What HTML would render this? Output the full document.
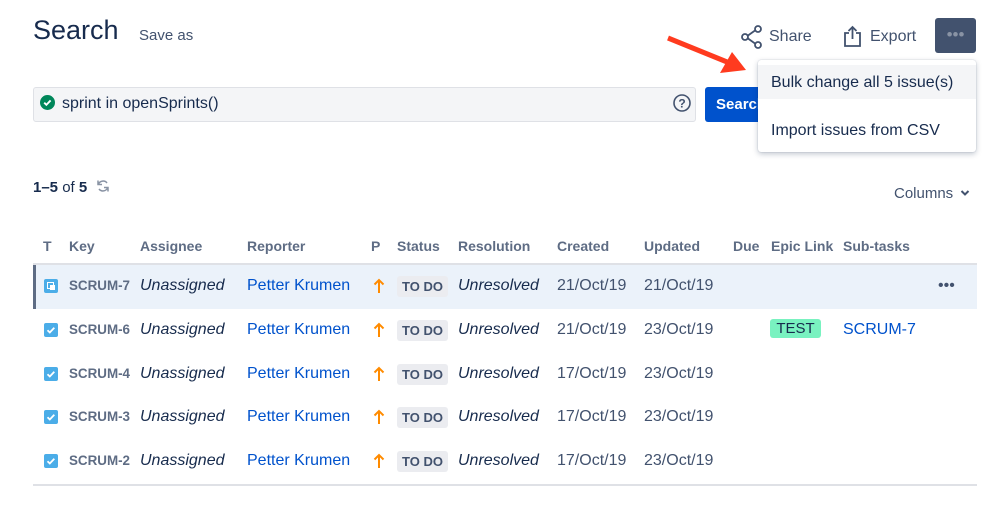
<!DOCTYPE html><html><head><style>
body{margin:0;width:998px;height:510px;background:#fff;font-family:"Liberation Sans",sans-serif;color:#172b4d;position:relative;overflow:hidden}
.a{position:absolute;white-space:nowrap}
.h{font-size:14px;font-weight:bold;color:#5e6c84;top:238px}
.row{position:absolute;left:33px;width:944px;height:44px}
.c{position:absolute;font-size:16px;line-height:42px;top:0}
.key{font-size:13.4px;font-weight:bold;color:#5e6c84}
.it{font-style:italic;color:#172b4d}
.lnk{color:#0052cc}
.dt{color:#42526e}
.bd{position:absolute;top:11px;height:21px;width:51px;background:#ebecf0;border-radius:3px;font-size:13px;font-weight:bold;color:#42526e;line-height:21px;text-align:center}
.ic{position:absolute;top:14px;left:11px;width:14px;height:14px;background:#4bade8;border-radius:2px}
</style></head><body>
<div class="a" style="left:33px;top:15px;font-size:27px;font-weight:500">Search</div>
<div class="a" style="left:139px;top:27px;font-size:15px;color:#42526e">Save as</div>
<svg class="a" style="left:740px;top:25px" width="24" height="24" viewBox="0 0 24 24" fill="none" stroke="#42526e" stroke-width="1.8"><circle cx="18" cy="4" r="3"/><circle cx="5" cy="12" r="3"/><circle cx="18" cy="20" r="3"/><path d="M8 10.5l7-5M8 13.5l7 5"/></svg>
<div class="a" style="left:769px;top:28px;font-size:16px;color:#42526e">Share</div>
<svg class="a" style="left:843px;top:25px" width="20" height="22" viewBox="0 0 20 22" fill="none" stroke="#42526e" stroke-width="1.8"><path d="M6 8H2v13h15V8h-4M9.5 14V2M5.5 6l4-4 4 4"/></svg>
<div class="a" style="left:870px;top:28px;font-size:16px;color:#42526e">Export</div>
<div class="a" style="left:935px;top:18px;width:41px;height:35px;background:#42526e;border-radius:3px;color:#8993a4;font-size:17px;text-align:center;line-height:33px;letter-spacing:0px">•••</div>
<div class="a" style="left:33px;top:87px;width:661px;height:33px;background:#f4f5f7;border:1px solid #dfe1e6;border-radius:3px"></div>
<svg class="a" style="left:40px;top:95px" width="15" height="15" viewBox="0 0 16 16"><circle cx="8" cy="8" r="8" fill="#00875a"/><path d="M4.5 8.2l2.3 2.3 4.5-4.7" stroke="#fff" stroke-width="2" fill="none"/></svg>
<div class="a" style="left:62px;top:95px;font-size:16px">sprint in openSprints()</div>
<svg class="a" style="left:673px;top:94px" width="18" height="18" viewBox="0 0 18 18"><circle cx="9" cy="9" r="8" fill="none" stroke="#42526e" stroke-width="1.6"/><text x="9" y="13.5" font-size="12" font-weight="bold" text-anchor="middle" fill="#42526e" font-family="Liberation Sans">?</text></svg>
<div class="a" style="left:705px;top:87px;width:70px;height:35px;background:#0052cc;border-radius:3px;color:#fff;font-weight:bold;font-size:15px;line-height:35px;padding-left:11px;box-sizing:border-box;overflow:hidden">Search</div>
<div class="a" style="left:758px;top:60px;width:218px;height:92px;background:#fff;border-radius:3px;box-shadow:0 2px 6px rgba(9,30,66,.25),0 0 1px rgba(9,30,66,.3)">
<div style="position:absolute;left:0;top:5px;width:218px;height:34px;background:#f4f5f7"></div>
<div class="a" style="left:13px;top:14px;font-size:16px">Bulk change all 5 issue(s)</div>
<div class="a" style="left:13px;top:62px;font-size:16px">Import issues from CSV</div></div>
<svg class="a" style="left:660px;top:30px" width="95" height="50"><path d="M8 8L72 34" stroke="#ff3b1f" stroke-width="5"/><path d="M86 40L60 43L72 22Z" fill="#ff3b1f"/></svg>
<div class="a" style="left:33px;top:179px;font-size:15px"><b>1–5</b> of <b>5</b></div>
<svg class="a" style="left:96px;top:179px" width="14" height="14" viewBox="0 0 14 14" fill="none" stroke="#8993a4" stroke-width="1.5"><path d="M11 4A5 5 0 0 0 2.5 5M3 10a5 5 0 0 0 8.5-1M2 1.5v4h4M12 12.5v-4H8"/></svg>
<div class="a" style="left:894px;top:185px;font-size:15px;color:#42526e">Columns</div>
<svg class="a" style="left:960px;top:189px" width="10" height="8"><path d="M1.5 2l3.5 3.5L8.5 2" stroke="#42526e" stroke-width="2" fill="none"/></svg>
<div class="a h" style="left:43px">T</div><div class="a h" style="left:69px">Key</div><div class="a h" style="left:140px">Assignee</div><div class="a h" style="left:247px">Reporter</div><div class="a h" style="left:371px">P</div><div class="a h" style="left:397px">Status</div><div class="a h" style="left:458px">Resolution</div><div class="a h" style="left:557px">Created</div><div class="a h" style="left:644px">Updated</div><div class="a h" style="left:733px">Due</div><div class="a h" style="left:771px">Epic Link</div><div class="a h" style="left:843px">Sub-tasks</div>
<div class="a" style="left:33px;top:263px;width:944px;height:2px;background:#dfe1e6"></div>
<div class="row" style="top:265px;background:#ebf2fa;border-left:3px solid #5e6c84;box-sizing:border-box"></div>
<div class="a" style="left:33px;top:484px;width:944px;height:2px;background:#dfe1e6"></div>
<div id="rows"></div>
<script>
var d=[["7","21/Oct/19","21/Oct/19"],["6","21/Oct/19","23/Oct/19"],["4","17/Oct/19","23/Oct/19"],["3","17/Oct/19","23/Oct/19"],["2","17/Oct/19","23/Oct/19"]],h="";
d.forEach(function(r,i){var t=265+i*43.8;
var icon=i==0?'<div class="ic"><div style="position:absolute;left:3px;top:3px;width:5px;height:5px;border:1px solid #fff"></div><div style="position:absolute;left:6px;top:6px;width:5px;height:5px;background:#fff"></div></div>':'<div class="ic"><svg width="14" height="14" style="position:absolute"><path d="M3.5 7.2l2.3 2.3 4.5-4.7" stroke="#fff" stroke-width="1.8" fill="none"/></svg></div>';
h+='<div class="row" style="top:'+t+'px">'+icon+
'<div class="c key" style="left:36px">SCRUM-'+r[0]+'</div><div class="c it" style="left:107px">Unassigned</div><div class="c lnk" style="left:214px">Petter Krumen</div>'+
'<svg style="position:absolute;left:340px;top:13px" width="12" height="16"><path d="M6 15V2M1.5 6.5L6 2l4.5 4.5" stroke="#ff8b00" stroke-width="2" fill="none"/></svg>'+
'<div class="bd" style="left:364px">TO DO</div><div class="c it" style="left:425px">Unresolved</div><div class="c dt" style="left:524px">'+r[1]+'</div><div class="c dt" style="left:611px">'+r[2]+'</div>'+
(i==0?'<div class="c" style="left:905px;font-size:16px;color:#42526e">•••</div>':'')+
(i==1?'<div style="position:absolute;left:737px;top:10px;width:51px;height:19px;background:#79f2c0;border-radius:3px;font-size:15px;line-height:19px;text-align:center;color:#172b4d">TEST</div><div class="c lnk" style="left:810px">SCRUM-7</div>':'')+'</div>';});
document.getElementById("rows").innerHTML=h;
</script>
</body></html>
